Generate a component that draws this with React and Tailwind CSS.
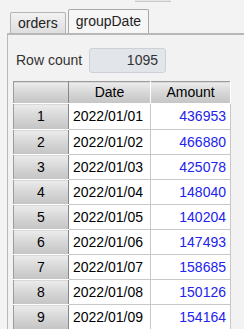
import React from "react";

const rows = [
  ["2022/01/01", 436953],
  ["2022/01/02", 466880],
  ["2022/01/03", 425078],
  ["2022/01/04", 148040],
  ["2022/01/05", 140204],
  ["2022/01/06", 147493],
  ["2022/01/07", 158685],
  ["2022/01/08", 150126],
  ["2022/01/09", 154164],
];

const headCell =
  "bg-gradient-to-b from-[#ececec] via-[#d6d6d6] to-[#c4c4c4] border-r border-b border-white";

export default function App() {
  return (
    <div
      className="w-[244px] h-[329px] overflow-hidden bg-[#f3f3f3] text-[14px] text-black"
      style={{ fontFamily: '"Liberation Sans", Arial, sans-serif' }}
    >
      <div className="h-[9px] pl-[135px]">
        <div className="w-[36px] h-[2px] border-b border-[#c8c8c8] bg-[#e6e6e6]" />
      </div>

      {/* tabs */}
      <div className="flex items-end pl-[10px] h-[24px]">
        <div className="h-[21px] px-[7px] flex items-center border border-b-0 border-[#b4b4b4] rounded-t-[2px] bg-gradient-to-b from-[#f2f2f2] to-[#dedede] text-[#222]">
          orders
        </div>
        <div className="h-[24px] ml-[2px] px-[7px] flex items-center border border-b-0 border-[#a8a8a8] rounded-t-[2px] bg-[#f6f6f6] text-[#222]">
          groupDate
        </div>
      </div>

      {/* panel */}
      <div className="ml-[7px] border-t-2 border-l border-[#b8b8b8] bg-[#f2f2f2] h-[300px]">
        <div className="flex items-center pl-[8px] pt-[12px] h-[39px]">
          <span className="w-[73px] text-[#333]">Row count</span>
          <div className="w-[77px] h-[25px] flex items-center justify-end pr-[7px] rounded-[3px] border border-[#cdd1d7] bg-[#e2e5ea] text-[#333]">
            1095
          </div>
        </div>

        <table className="mt-[7px] ml-[5px] border-collapse border-t border-l border-[#9c9c9c] table-fixed">
          <thead>
            <tr className="h-[21px]">
              <th className={`${headCell} w-[55px] border-r-[#888]`} />
              <th className={`${headCell} w-[82px] font-normal`}>Date</th>
              <th className={`${headCell} w-[80px] font-normal`}>Amount</th>
            </tr>
          </thead>
          <tbody>
            {rows.map(([date, amount], i) => (
              <tr key={date} className={i === 0 ? "h-[26px]" : "h-[25px]"}>
                <td className={`${headCell} text-center border-r-[#888]`}>{i + 1}</td>
                <td className="bg-white border-r border-b border-[#c8c8c8] pl-[4px]">{date}</td>
                <td className="bg-white border-r border-b border-[#c8c8c8] pr-[4px] text-right text-[#2222ee]">
                  {amount}
                </td>
              </tr>
            ))}
          </tbody>
        </table>
      </div>
    </div>
  );
}
